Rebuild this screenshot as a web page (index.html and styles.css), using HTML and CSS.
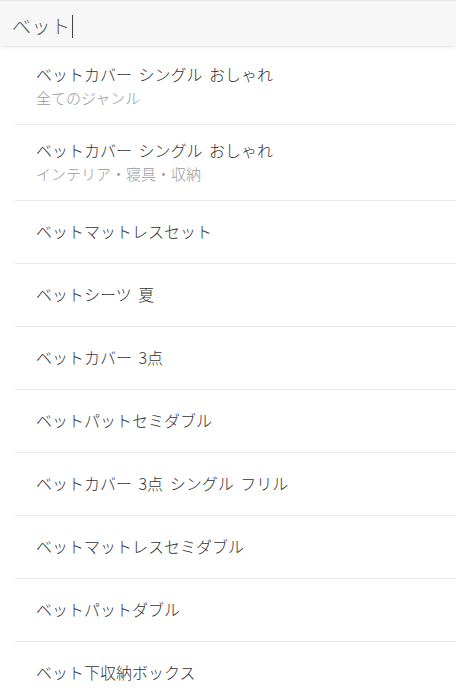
FILE: index.html
```html
<!DOCTYPE html>
<html lang="ja">
<head>
<meta charset="utf-8">
<link rel="stylesheet" href="styles.css">
</head>
<body>
<div class="search">
  <span class="query">ベット</span><span class="caret"></span>
</div>
<ul class="list">
  <li class="item two"><div class="main">ベットカバー シングル おしゃれ</div><div class="sub">全てのジャンル</div></li>
  <li class="item two"><div class="main">ベットカバー シングル おしゃれ</div><div class="sub">インテリア・寝具・収納</div></li>
  <li class="item"><div class="main">ベットマットレスセット</div></li>
  <li class="item"><div class="main">ベットシーツ 夏</div></li>
  <li class="item"><div class="main">ベットカバー 3点</div></li>
  <li class="item"><div class="main">ベットパットセミダブル</div></li>
  <li class="item"><div class="main">ベットカバー 3点 シングル フリル</div></li>
  <li class="item"><div class="main">ベットマットレスセミダブル</div></li>
  <li class="item"><div class="main">ベットパットダブル</div></li>
  <li class="item"><div class="main">ベット下収納ボックス</div></li>
</ul>
</body>
</html>
```
FILE: styles.css
```css
html, body {
  margin: 0;
  padding: 0;
  background: #fff;
  font-family: "Noto Sans CJK JP", "Noto Sans", sans-serif;
  font-weight: 300;
  overflow: hidden;
}
.search {
  box-sizing: border-box;
  height: 46px;
  padding: 5px 0 0 12px;
  border-top: 1px solid #e4e4e4;
  background: #f7f7f7;
  box-shadow: 0 1px 3px rgba(0,0,0,0.12);
  display: flex;
  align-items: center;
  position: relative;
  z-index: 1;
  margin-bottom: 3px;
}
.query {
  font-size: 19px;
  color: #555;
  line-height: 24px;
  letter-spacing: 0.5px;
}
.caret {
  display: inline-block;
  width: 1px;
  height: 23px;
  background: #444;
  margin-left: 1px;
}
.list {
  list-style: none;
  margin: 0;
  padding: 0 0 0 15px;
}
.item {
  border-bottom: 1px solid #e8e8e8;
  padding: 18px 0 20px 21px;
}
.item.two {
  padding: 13px 0 14px 21px;
}
.main {
  font-size: 16px;
  line-height: 24px;
  color: #333;
  word-spacing: 3px;
}
.sub {
  font-size: 15px;
  line-height: 24px;
  color: #999;
}
```
